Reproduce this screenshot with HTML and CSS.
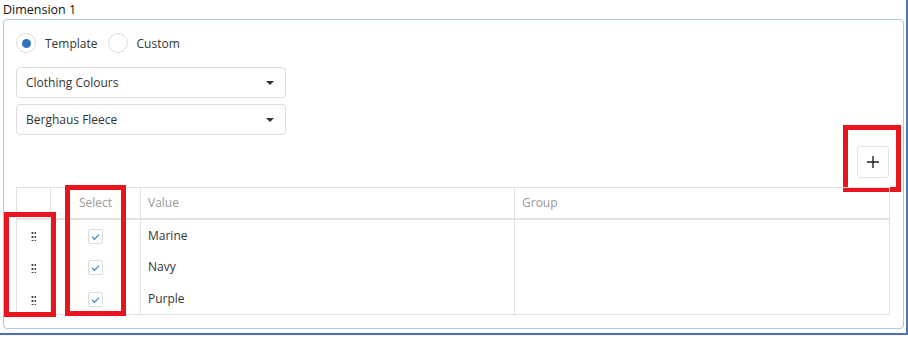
FILE: index.html
```html
<!DOCTYPE html>
<html lang="en">
<head>
  <meta charset="UTF-8" />
  <title>Dimension 1</title>
  <link rel="stylesheet" href="styles.css">
</head>
<body>
  <div class="frame">
    <div class="dim-label">Dimension 1</div>

    <div class="panel">
      <!-- template / custom -->
      <div class="radios">
        <label class="radio checked"><span class="dot"></span>Template</label>
        <label class="radio"><span class="dot"></span>Custom</label>
      </div>

      <div class="select">Clothing Colours<span class="caret"></span></div>
      <div class="select">Berghaus Fleece<span class="caret"></span></div>

      <div class="toolbar">
        <button class="add-btn" type="button">
          <svg width="14" height="14" viewBox="0 0 14 14"><path d="M7 1v12M1 7h12" stroke="#222" stroke-width="1.4" fill="none"/></svg>
        </button>
        <span class="mark mark-add"></span>
      </div>

      <div class="table-wrap">
        <table class="grid">
          <colgroup>
            <col style="width:34px">
            <col style="width:90px">
            <col style="width:374px">
            <col>
          </colgroup>
          <thead>
            <tr><th></th><th class="center">Select</th><th>Value</th><th>Group</th></tr>
          </thead>
          <tbody>
            <tr>
              <td class="center"><span class="handle"></span></td>
              <td class="center"><span class="check"></span></td>
              <td>Marine</td><td></td>
            </tr>
            <tr>
              <td class="center"><span class="handle"></span></td>
              <td class="center"><span class="check"></span></td>
              <td>Navy</td><td></td>
            </tr>
            <tr>
              <td class="center"><span class="handle"></span></td>
              <td class="center"><span class="check"></span></td>
              <td>Purple</td><td></td>
            </tr>
          </tbody>
        </table>
        <span class="mark mark-drag"></span>
        <span class="mark mark-select"></span>
      </div>
    </div>
  </div>
</body>
</html>
```

FILE: styles.css
```css
* { box-sizing: border-box; }
body {
  margin: 0;
  font-family: "Open Sans", "Noto Sans", Arial, sans-serif;
  font-size: 12px;
  color: #333;
  background: #fff;
}
.frame {
  width: 908px;
  height: 335px;
  padding-top: 2px;
  border-right: 2px solid #4f72b0;
  border-bottom: 2px solid #4f72b0;
}
.dim-label {
  padding-left: 3px;
  height: 17px;
  font-size: 12.5px;
  line-height: 15px;
  color: #111;
}
.panel {
  margin-left: 3px;
  width: 901px;
  height: 310px;
  border: 1px solid #a9c8ea;
  border-radius: 4px;
  padding: 13px 13px 0 12px;
}
.radios {
  display: flex;
  align-items: center;
  height: 20px;
  margin-bottom: 14px;
}
.radio {
  display: flex;
  align-items: center;
  margin-right: 10px;
}
.radio .dot {
  width: 20px;
  height: 20px;
  border: 1px solid #dcdcdc;
  border-radius: 50%;
  margin-right: 9px;
  display: flex;
  align-items: center;
  justify-content: center;
}
.radio.checked .dot::after {
  content: "";
  width: 9px;
  height: 9px;
  border-radius: 50%;
  background: #2d72bd;
}
.select {
  position: relative;
  width: 270px;
  height: 31px;
  border: 1px solid #dcdcdc;
  border-radius: 4px;
  padding-left: 9px;
  line-height: 29px;
  margin-bottom: 6px;
}
.caret {
  position: absolute;
  right: 11px;
  top: 13px;
  border-left: 4px solid transparent;
  border-right: 4px solid transparent;
  border-top: 4px solid #333;
}
.toolbar {
  position: relative;
  display: flex;
  justify-content: flex-end;
  margin-top: 11px;
  padding-right: 1px;
}
.add-btn {
  width: 32px;
  height: 32px;
  border: 1px solid #e3e3e3;
  border-radius: 3px;
  background: #fff;
  padding: 0;
  display: flex;
  align-items: center;
  justify-content: center;
}
.table-wrap {
  position: relative;
  margin-top: 9px;
}
.grid {
  width: 874px;
  border-collapse: collapse;
  table-layout: fixed;
}
.grid th, .grid td {
  border: 1px solid #e2e2e2;
  height: 32px;
  padding: 0 7px;
  text-align: left;
  font-weight: normal;
}
.grid th {
  height: 31px;
  color: #999;
  border-bottom: 2px solid #e2e2e2;
}
.grid tbody td { border-top: none; border-bottom: none; }
.grid tbody tr:last-child td { border-bottom: 1px solid #e2e2e2; }
.grid .center { text-align: center; padding: 0; }
.handle {
  display: inline-block;
  width: 5px;
  height: 10px;
  vertical-align: middle;
  background: radial-gradient(circle, #444 1px, transparent 1.2px) 0 0 / 3px 4px;
}
.check {
  display: inline-block;
  position: relative;
  width: 15px;
  height: 15px;
  border: 1px solid #dcdcdc;
  border-radius: 2px;
  vertical-align: middle;
}
.check::after {
  content: "";
  position: absolute;
  top: 4px;
  left: 3px;
  width: 6px;
  height: 3px;
  border-left: 1.5px solid #2d6fc2;
  border-bottom: 1.5px solid #2d6fc2;
  transform: rotate(-45deg);
}
/* red annotation boxes */
.mark {
  position: absolute;
  border: 5px solid #e8141e;
}
.mark-add { right: -11px; top: -21px; width: 58px; height: 67px; }
.mark-drag { left: -12px; top: 25px; width: 52px; height: 105px; }
.mark-select { left: 49px; top: -2px; width: 61px; height: 131px; }
```
